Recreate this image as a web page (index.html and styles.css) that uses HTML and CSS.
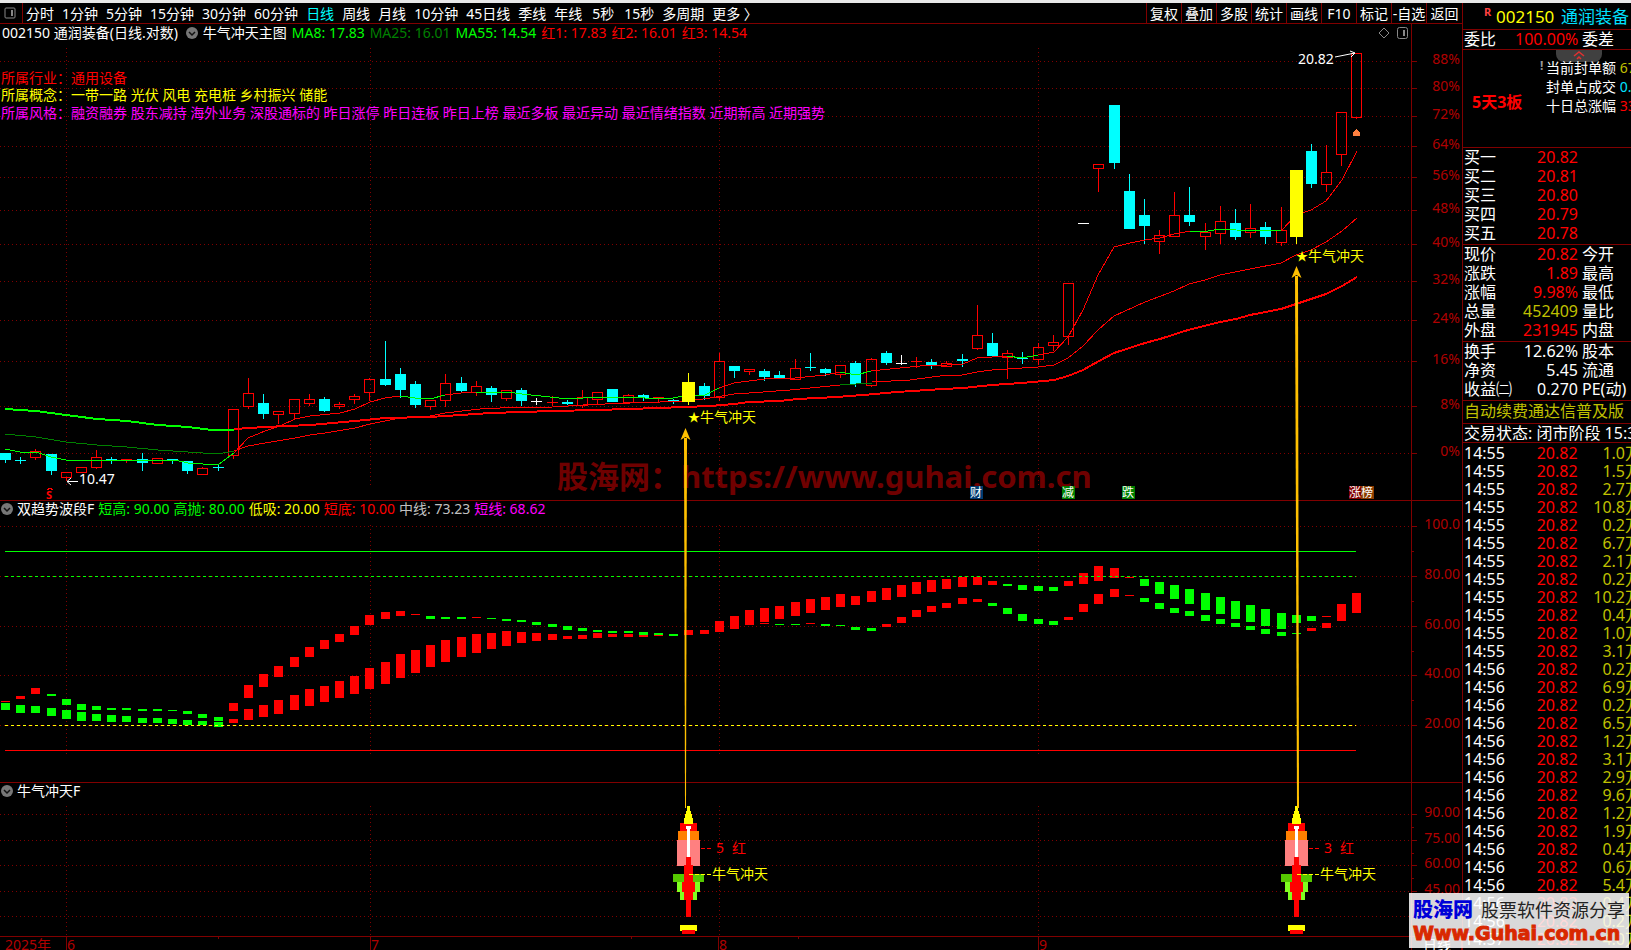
FILE: index.html
```html
<!DOCTYPE html>
<html lang="zh-CN">
<head>
  <meta charset="UTF-8">
  <meta name="viewport" content="width=device-width, initial-scale=1.0">
  <title>002150 通润装备</title>
  <link rel="stylesheet" href="styles.css">
</head>
<body>

<div class="app">
  <main class="main">
    <nav class="toolbar">
      <span class="panel-toggle">
        <svg width="12" height="12" viewBox="0 0 12 12"><rect x="1" y="1" width="10" height="10" rx="1" fill="none" stroke="#888"/><rect x="7" y="3" width="2" height="6" fill="#888"/></svg>
      </span>
      <div class="periods">
        <button>分时</button>
        <button>1分钟</button>
        <button>5分钟</button>
        <button>15分钟</button>
        <button>30分钟</button>
        <button>60分钟</button>
        <button class="active">日线</button>
        <button>周线</button>
        <button>月线</button>
        <button>10分钟</button>
        <button>45日线</button>
        <button>季线</button>
        <button>年线</button>
        <button class="sec">5秒</button>
        <button class="sec">15秒</button>
        <button>多周期</button>
        <button>更多 〉</button>
      </div>
      <div class="tools">
        <button>复权</button>
        <button>叠加</button>
        <button>多股</button>
        <button>统计</button>
        <button>画线</button>
        <button>F10</button>
        <button>标记</button>
        <button>-自选</button>
        <button>返回</button>
      </div>
    </nav>

    <div class="charts">
      <!-- K line -->
      <section class="panel">
        <header class="panel-head main-head">
          <span class="title">002150 通润装备(日线.对数)</span>
          <svg class="drop" width="12" height="12" viewBox="0 0 12 12"><circle cx="6" cy="6" r="6" fill="#777"/><path d="M3 5l3 3 3-3" fill="none" stroke="#111" stroke-width="1.5"/></svg>
          <span>牛气冲天主图</span>
          <span class="green">MA8: 17.83</span>
          <span class="dark-green">MA25: 16.01</span>
          <span class="green">MA55: 14.54</span>
          <span class="red">红1: 17.83</span>
          <span class="red">红2: 16.01</span>
          <span class="red">红3: 14.54</span>
          <span class="head-icons">
            <svg width="30" height="14" viewBox="0 0 30 14"><path d="M6 2l5 5-5 5-5-5z" fill="none" stroke="#888"/><rect x="19.500" y="1.500" width="10" height="11" rx="2" fill="none" stroke="#888"/><rect x="25" y="4" width="2" height="6" fill="#888"/></svg>
          </span>
        </header>
        <svg class="chart" id="kline" viewBox="0 42 1462 458">
          <g id="klineGrid"></g>
          <text class="mark" x="557" y="488">股海网：https://www.guhai.com.cn</text>
          <g id="candles"></g>
          <g id="maLines"></g>
          <g id="signals"></g>

          <text class="t-red" x="1" y="83">所属行业：通用设备</text>
          <text class="t-yellow" x="1" y="100">所属概念：一带一路 光伏 风电 充电桩 乡村振兴 储能</text>
          <text class="t-magenta" x="1" y="118">所属风格：融资融券 股东减持 海外业务 深股通标的 昨日涨停 昨日连板 昨日上榜 最近多板 最近异动 最近情绪指数 近期新高 近期强势</text>

          <text class="t-white" x="1298" y="64">20.82</text>
          <path class="pointer" d="M1335 57l20-4M1350 51l5 2-4 4"/>
          <text class="t-white" x="79" y="484">10.47</text>
          <path class="pointer" d="M78 481.500H67M71 478l-4 3.500 4 3.500"/>
          <text class="t-red small-s" x="46" y="499">S</text>
          <path d="M47 490l3-2 3 2" fill="none" stroke="#f00"/>
          <path d="M1353 136v-3l3.500-4 3.500 4v3z" fill="#ff8040"/>

          <text class="t-yellow" x="688" y="422"><tspan class="star">★</tspan>牛气冲天</text>
          <text class="t-yellow" x="1296" y="261"><tspan class="star">★</tspan>牛气冲天</text>

          <g class="tags">
            <rect x="970" y="486" width="13" height="13" fill="#003a70"/><text x="970" y="497">财</text>
            <rect x="1062" y="486" width="13" height="13" fill="#008000"/><text x="1062" y="497">减</text>
            <rect x="1122" y="486" width="13" height="13" fill="#008000"/><text x="1122" y="497">跌</text>
            <rect x="1349" y="486" width="12" height="13" fill="#800000"/><text x="1349" y="497">涨</text>
            <rect x="1361" y="486" width="13" height="13" fill="#8a3c00"/><text x="1361" y="497">榜</text>
          </g>
        </svg>
      </section>

      <!-- trend bands -->
      <section class="panel">
        <header class="panel-head">
          <svg class="drop" width="12" height="12" viewBox="0 0 12 12"><circle cx="6" cy="6" r="6" fill="#777"/><path d="M3 5l3 3 3-3" fill="none" stroke="#111" stroke-width="1.5"/></svg>
          <span>双趋势波段F</span>
          <span class="green">短高: 90.00</span>
          <span class="green">高抛: 80.00</span>
          <span class="yellow">低吸: 20.00</span>
          <span class="red">短底: 10.00</span>
          <span class="gray">中线: 73.23</span>
          <span class="magenta">短线: 68.62</span>
        </header>
        <svg class="chart" id="trend" viewBox="0 519 1462 263">
          <g id="trendGrid"></g>
          <g id="bands"></g>
          <path d="M5 551.500H1356" stroke="#0f0"/>
          <path d="M5 576.500H1356" stroke="#0f0" stroke-dasharray="3 3"/>
          <path d="M5 725.500H1356" stroke="#ff0" stroke-dasharray="3 3"/>
          <path d="M5 750.500H1356" stroke="#f00"/>
        </svg>
      </section>

      <!-- signal rockets -->
      <section class="panel">
        <header class="panel-head">
          <svg class="drop" width="12" height="12" viewBox="0 0 12 12"><circle cx="6" cy="6" r="6" fill="#777"/><path d="M3 5l3 3 3-3" fill="none" stroke="#111" stroke-width="1.5"/></svg>
          <span>牛气冲天F</span>
        </header>
        <svg class="chart" id="rocket" viewBox="0 801 1462 135">
          <g id="rocketGrid"></g>
          <g id="rockets"></g>
          <path d="M701 848.500h4m2 0h4M1309 848.500h4m2 0h4" stroke="#f00"/>
          <text class="t-red" x="716" y="853">5</text>
          <text class="t-red" x="732" y="853">红</text>
          <text class="t-red" x="1324" y="853">3</text>
          <text class="t-red" x="1340" y="853">红</text>
          <path d="M689 874.500h22M1297 874.500h22" stroke="#ff0" stroke-dasharray="4 2"/>
          <text class="t-yellow" x="712" y="879">牛气冲天</text>
          <text class="t-yellow" x="1320" y="879">牛气冲天</text>
        </svg>
      </section>

      <svg class="chart" viewBox="0 937 1462 13">
        <path d="M66.500 937v13M370.500 937v13M718.500 937v13M1038.500 937v13M1411.500 937v13M1461.500 937v13M218.500 937v2M631.500 937v2M798.500 937v2" stroke="#800000"/>
        <text class="t-axis" x="5" y="950">2025年</text>
        <text class="t-axis" x="67" y="950">6</text>
        <text class="t-axis" x="371" y="950">7</text>
        <text class="t-axis" x="719" y="950">8</text>
        <text class="t-axis" x="1039" y="950">9</text>
        <text class="t-white" x="1423" y="950">日线</text>
      </svg>

      <!-- arrows from the rockets up to the signal candles -->
      <svg class="overlay" viewBox="0 24 1462 926">
        <path d="M684 438h3L686 808h-1z" fill="#ffc000"/>
        <path d="M685.500 428l5 12-5-3-5 3z" fill="#ffc000"/>
        <path d="M1295 276h3L1299 808h-2z" fill="#ffc000"/>
        <path d="M1296.500 266l5 12-5-3-5 3z" fill="#ffc000"/>
      </svg>
    </div>
  </main>

  <aside class="side">
    <h1 class="stock"><sup>R</sup><span class="code">002150</span><span class="name">通润装备</span></h1>

    <table class="quote ratio">
      <tr><th>委比</th><td class="red">100.00%</td><th>委差</th></tr>
    </table>

    <div class="limit">
      <button class="fold" aria-label="收起">
        <svg width="12" height="10" viewBox="0 0 12 10"><path d="M1 5l5-4 5 4M4 8l2-2 2 2" fill="none" stroke="#e03030" stroke-width="1.5"/></svg>
      </button>
      <strong>5天3板</strong>
      <ul>
        <li class="warn">当前封单额 <span class="olive">67</span></li>
        <li>封单占成交 <span class="cyan">0.9</span></li>
        <li>十日总涨幅 <span class="red">33</span></li>
      </ul>
    </div>

    <table class="quote bids">
      <tr><th>买一</th><td class="red">20.82</td><th></th></tr>
      <tr><th>买二</th><td class="red">20.81</td><th></th></tr>
      <tr><th>买三</th><td class="red">20.80</td><th></th></tr>
      <tr><th>买四</th><td class="red">20.79</td><th></th></tr>
      <tr><th>买五</th><td class="red">20.78</td><th></th></tr>
    </table>

    <table class="quote">
      <tr><th>现价</th><td class="red">20.82</td><th>今开</th></tr>
      <tr><th>涨跌</th><td class="red">1.89</td><th>最高</th></tr>
      <tr><th>涨幅</th><td class="red">9.98%</td><th>最低</th></tr>
      <tr><th>总量</th><td class="olive">452409</td><th>量比</th></tr>
      <tr><th>外盘</th><td class="red">231945</td><th>内盘</th></tr>
    </table>

    <table class="quote">
      <tr><th>换手</th><td>12.62%</td><th>股本</th></tr>
      <tr><th>净资</th><td>5.45</td><th>流通</th></tr>
      <tr><th>收益㈡</th><td>0.270</td><th>PE(动)</th></tr>
    </table>

    <p class="notice olive">自动续费通达信普及版</p>
    <p class="status">交易状态: 闭市阶段 15:30</p>

    <table class="ticks">
      <tbody id="ticks"></tbody>
    </table>
  </aside>

  <div class="logo">
    <div class="logo-top"><b>股海网</b><span>股票软件资源分享</span></div>
    <div class="logo-url">Www.Guhai.com.cn</div>
  </div>
</div>

<script src="charts.js"></script>
</body>
</html>
```
FILE: styles.css
```css
* { box-sizing: border-box; }
body {
  margin: 0;
  background: #000;
  color: #fff;
  font-family: "Noto Sans", "Noto Sans CJK SC", sans-serif;
  font-size: 14px;
  line-height: 18px;
  overflow: hidden;
}
button {
  background: none;
  border: none;
  color: inherit;
  font: inherit;
  padding: 0;
  white-space: nowrap;
  cursor: pointer;
}
.app {
  display: grid;
  grid-template-columns: minmax(0, 1fr) 169px;
  min-height: 100vh;
  border-top: 3px solid #e8e8e8;
  position: relative;
}

/* colours */
.green { color: #0f0; }
.dark-green { color: #008000; }
.red { color: #f00; }
.yellow { color: #ff0; }
.magenta { color: #f0f; }
.gray { color: #c0c0c0; }
.olive { color: #c0c000; }
.cyan { color: #00e0ff; }

/* toolbar */
.toolbar {
  display: flex;
  height: 21px;
  border-bottom: 1px solid #800000;
  line-height: 20px;
}
.toolbar button { padding-top: 1px; }
.panel-toggle {
  display: flex;
  align-items: center;
  width: 23px;
  padding-left: 4px;
  border-right: 1px solid #800000;
}
.periods {
  display: flex;
  gap: 8px;
  padding-left: 3px;
}
.periods .active { color: #00ffff; }
.periods .sec { padding-left: 2px; }
.tools {
  display: flex;
  margin-left: auto;
}
.tools button {
  width: 35px;
  border-left: 1px solid #800000;
  text-align: center;
}
.tools button:last-child { width: 36px; }

/* charts */
.charts { position: relative; }
.panel { border-bottom: 1px solid #800000; }
.panel-head {
  display: flex;
  align-items: center;
  gap: 4px;
  height: 18px;
  padding: 0 0 2px 1px;
  line-height: 16px;
  white-space: nowrap;
}
.main-head {
  gap: 5px;
  padding: 0 0 0 2px;
}
.main-head .title { padding-right: 3px; }
.head-icons {
  display: flex;
  margin-left: auto;
  padding-right: 54px;
}
.chart {
  display: block;
  width: 100%;
  overflow: visible;
  shape-rendering: crispEdges;
}
.overlay {
  position: absolute;
  top: 0;
  left: 0;
  width: 100%;
  pointer-events: none;
}
.chart text { font-size: 14px; }
.t-red { fill: #f00; }
.t-yellow { fill: #ff0; }
.t-magenta { fill: #f0f; }
.t-white { fill: #fff; }
.t-axis { fill: #b00000; }
.star { font-size: 12px; }
.chart .small-s { font-size: 11px; font-weight: bold; }
.chart .mark {
  fill: #f00;
  fill-opacity: 0.45;
  font-size: 31px;
  font-weight: bold;
}
.chart .tags text { font-size: 12px; fill: #fff; }
.pointer {
  fill: none;
  stroke: #fff;
  shape-rendering: auto;
}

/* side quote */
.side {
  border-left: 1px solid #800000;
  overflow: hidden;
  font-size: 16px;
  white-space: nowrap;
}
.stock {
  display: flex;
  height: 27px;
  margin: 0;
  padding-left: 21px;
  border-bottom: 1px solid #800000;
  font-size: 17px;
  font-weight: normal;
  line-height: 28px;
}
.stock sup {
  width: 12px;
  font-size: 11px;
  font-weight: bold;
  line-height: 18px;
  color: #ff4040;
}
.stock .code { width: 65px; color: #ff0; }
.stock .name { color: #00e0ff; }
table { border-collapse: collapse; }
.quote, .ticks {
  table-layout: fixed;
  width: 178px;
}
.quote {
  border-bottom: 1px solid #800000;
}
.quote th, .quote td {
  height: 19px;
  padding: 0;
  line-height: 19px;
  font-weight: normal;
  text-align: right;
}
.quote th { text-align: left; padding-left: 1px; }
.quote th:first-child { width: 52px; }
.quote td { width: 63px; }
.quote th:last-child { padding-left: 4px; }
.quote tr:last-child > * { height: 20px; padding-bottom: 1px; }
.ratio tr:last-child > * { height: 19px; padding-bottom: 0; }
.limit {
  display: flex;
  position: relative;
  height: 98px;
  padding-top: 8px;
  border-bottom: 1px solid #800000;
  font-size: 14px;
}
.fold {
  position: absolute;
  top: 0;
  left: 93px;
  width: 46px;
  height: 12px;
  border-radius: 0 0 8px 8px;
  background: #404040;
}
.fold svg { display: block; margin: 0 auto; }
.limit strong {
  flex: none;
  width: 69px;
  padding: 34px 0 0 9px;
  font-size: 16px;
  line-height: 20px;
  color: #f00;
}
.limit ul {
  margin: 0;
  padding: 0 0 0 14px;
  list-style: none;
  line-height: 19px;
  position: relative;
}
.limit .warn::before {
  content: "!";
  position: absolute;
  left: 8px;
  top: -2px;
  font-size: 12px;
  font-weight: bold;
  color: #999;
}
.notice, .status {
  margin: 0;
  padding-left: 1px;
  border-bottom: 1px solid #800000;
}
.notice { height: 23px; line-height: 21px; }
.status { height: 19px; line-height: 18px; }
.ticks { margin-top: 1px; }
.ticks td {
  width: 63px;
  height: 18px;
  padding: 0;
  line-height: 18px;
  text-align: right;
}
.ticks td:first-child { width: 51px; padding-left: 1px; text-align: left; }

/* site logo over the lower right corner */
.logo {
  position: absolute;
  right: 2px;
  bottom: 2px;
  width: 220px;
  height: 55px;
  padding: 4px 4px 0;
  background: rgba(255, 255, 255, 0.85);
  white-space: nowrap;
}
.logo-top {
  display: flex;
  justify-content: space-between;
  line-height: 26px;
}
.logo-top b { font-size: 20px; font-weight: 900; color: #0000d8; }
.logo-top span { font-size: 18px; color: #222; }
.logo-url {
  font-family: "DejaVu Sans", sans-serif;
  font-size: 19px;
  font-weight: bold;
  line-height: 20px;
  color: #d92800;
  -webkit-text-stroke: 1px #d92800;
}
```
FILE: charts.js
```javascript
const GRID = "#800000";
const COLORS = { r: "#ff0000", c: "#00ffff", g: "#00ff00", d: "#008000", y: "#ffff00", w: "#ffffff" };
const MONTHS = [66, 370, 719, 1038];

const barX = i => Math.round(5 + i * 15.185);

function rect(x, y, w, h, fill) {
  return `<rect x="${x}" y="${y}" width="${w}" height="${h}" fill="${fill}"/>`;
}

function drawGrid(id, top, bottom, end, levels, minor) {
  let out = "";
  MONTHS.forEach(x => {
    out += `<path d="M${x + 0.5} ${top}V${bottom}" stroke="${GRID}" stroke-dasharray="1 3"/>`;
  });
  levels.forEach(([y, label]) => {
    out += `<path d="M0 ${y + 0.5}H1411" stroke="${GRID}" stroke-dasharray="1 3"/>`;
    out += `<path d="M1411 ${y + 0.5}H1417" stroke="${GRID}"/>`;
    out += `<text class="t-axis" x="1460" y="${y + 3}" text-anchor="end">${label}</text>`;
  });
  minor.forEach(y => { out += rect(1412, y, 2, 1, GRID); });
  out += rect(1411, end[0], 1, end[1] - end[0], GRID);
  document.getElementById(id).innerHTML = out;
}

drawGrid("klineGrid", 48, 485, [24, 500], [
  [61, "88%"], [88, "80%"], [116, "72%"], [146, "64%"], [177, "56%"], [210, "48%"],
  [244, "40%"], [281, "32%"], [320, "24%"], [361, "16%"], [406, "8%"], [453, "0%"]
], []);
drawGrid("trendGrid", 525, 757, [501, 782], [
  [526, "100.0"], [576, "80.00"], [626, "60.00"], [675, "40.00"], [725, "20.00"]
], [551, 601, 651, 700]);
drawGrid("rocketGrid", 806, 935, [783, 936], [
  [814, "90.00"], [840, "75.00"], [865, "60.00"], [891, "45.00"], [916, "30.00"]
], [827, 853, 878, 904]);

// type, high, body top, body bottom, low
const candles = [
  ["c", 453, 453, 460, 463], ["c", 457, 460, 461, 464], ["r", 449, 451, 458, 460], ["c", 454, 454, 471, 475],
  ["r", 472, 472, 478, 481], ["r", 467, 467, 473, 473], ["r", 450, 457, 468, 469], ["c", 457, 459, 460, 464],
  ["r", 459, 459, 461, 463], ["c", 453, 459, 463, 471], ["r", 458, 458, 464, 464], ["c", 459, 459, 460, 464],
  ["c", 461, 461, 471, 474], ["r", 467, 468, 475, 475], ["c", 464, 467, 468, 471], ["r", 409, 409, 456, 459],
  ["r", 378, 393, 407, 409], ["c", 394, 403, 414, 419], ["r", 411, 411, 415, 424], ["r", 399, 399, 414, 419],
  ["r", 394, 399, 404, 406], ["c", 397, 399, 411, 412], ["r", 402, 404, 407, 409], ["r", 394, 396, 400, 404],
  ["r", 378, 379, 393, 401], ["c", 341, 379, 385, 386], ["c", 368, 374, 390, 398], ["c", 381, 384, 405, 408],
  ["r", 400, 400, 407, 410], ["r", 374, 383, 401, 407], ["c", 377, 383, 391, 393], ["r", 381, 386, 393, 396],
  ["c", 386, 388, 395, 402], ["r", 390, 390, 399, 401], ["c", 388, 390, 401, 406], ["w", 398, 401, 402, 405],
  ["r", 396, 402, 403, 406], ["c", 400, 402, 404, 405], ["r", 390, 397, 406, 408], ["r", 392, 392, 400, 404],
  ["c", 389, 389, 402, 402], ["r", 394, 395, 403, 403], ["c", 394, 395, 398, 401], ["r", 397, 397, 399, 402],
  ["c", 399, 400, 402, 404], ["y", 373, 382, 402, 405], ["c", 383, 386, 396, 400], ["r", 353, 361, 398, 401],
  ["c", 366, 366, 371, 378], ["r", 369, 369, 372, 375], ["c", 369, 371, 377, 381], ["c", 371, 375, 378, 379],
  ["r", 359, 368, 380, 380], ["c", 353, 367, 368, 371], ["c", 368, 369, 373, 376], ["r", 365, 365, 375, 378],
  ["c", 361, 363, 384, 387], ["r", 358, 359, 386, 387], ["c", 351, 353, 363, 365], ["w", 355, 363, 364, 365],
  ["r", 357, 361, 362, 368], ["c", 359, 362, 365, 369], ["r", 361, 363, 367, 367], ["c", 354, 359, 361, 367],
  ["r", 305, 335, 349, 350], ["c", 333, 343, 356, 356], ["r", 350, 353, 358, 379], ["c", 352, 358, 359, 364],
  ["r", 343, 347, 360, 365], ["r", 335, 342, 346, 351], ["r", 283, 283, 337, 345], ["w", 223, 223, 224, 224],
  ["r", 164, 164, 169, 192], ["c", 105, 105, 163, 169], ["c", 174, 191, 229, 229], ["c", 199, 215, 226, 244],
  ["r", 230, 235, 242, 254], ["r", 192, 215, 237, 237], ["c", 187, 215, 222, 226], ["r", 223, 232, 237, 250],
  ["r", 206, 221, 234, 244], ["c", 209, 223, 237, 240], ["r", 204, 228, 233, 238], ["c", 222, 227, 237, 244],
  ["r", 207, 230, 243, 246], ["y", 170, 170, 237, 244], ["c", 144, 151, 184, 188], ["r", 145, 172, 185, 192],
  ["r", 112, 112, 155, 166], ["r", 53, 53, 118, 119]
];

function candle(i) {
  const [type, high, top, bottom, low] = candles[i];
  const x = barX(i);
  const color = COLORS[type];
  let out = "";
  if (type === "r" && bottom - top > 1) {
    out += rect(x, high, 1, top - high, color) + rect(x, bottom, 1, low - bottom, color);
    out += `<rect x="${x - 4.5}" y="${top + 0.5}" width="10" height="${bottom - top - 1}" fill="none" stroke="${color}"/>`;
  } else {
    const half = type === "y" ? 6 : 5;
    out += rect(x, high, 1, low - high, color);
    out += rect(x - half, top, half * 2 + 1, bottom - top, color);
  }
  return out;
}

let candleSvg = "", signalSvg = "";
candles.forEach((c, i) => {
  if (c[0] === "y") signalSvg += candle(i);
  else candleSvg += candle(i);
});
document.getElementById("candles").innerHTML = candleSvg;
document.getElementById("signals").innerHTML = signalSvg;

// colour, stroke width, points
const lines = [
  ["g", 2, "5,409 36,411 66,415 97,419 127,421 158,425 188,427 212,430 234,430"],
  ["r", 2, "234,429 265,427 310,425 355,421 385,418 430,417 491,413 522,412 553,411 597,410 628,409 658,408 710,406 734,404 749,402 780,401 797,399 837,397 863,395 897,392 943,389 963,388 992,385 1022,383 1054,380 1068,376 1083,370 1099,361 1114,353 1145,343 1160,339 1188,330 1220,322 1236,319 1250,315 1281,309 1296,304 1326,294 1342,286 1357,277"],
  ["d", 1, "5,434 36,437 66,442 97,445 127,447 158,450 188,452 218,454 234,451"],
  ["r", 1, "234,451 248,446 265,443 295,438 310,435 325,433 355,428 370,424 400,418 430,416 445,413 480,409 500,408 553,407 583,405 605,404 630,403 660,402 688,401 710,398 734,394 749,393 790,390 840,385"],
  ["d", 1, "840,385 872,383"],
  ["r", 1, "872,382 910,380 940,376 962,375 977,372 992,370 1007,369 1038,367 1054,365 1068,358 1083,346 1098,330 1114,316 1145,302 1174,291 1189,284 1205,280 1220,275 1250,269 1281,263 1296,255 1311,250 1326,242 1342,231 1357,218"],
  ["g", 1, "5,449 20,452 36,452 51,457 66,460 81,461 97,460 175,460 188,463 218,465 234,453"],
  ["r", 1, "234,453 248,438 265,431 280,426 295,419 310,416 340,413 355,409 370,402 385,398 400,396"],
  ["g", 1, "400,396 415,398 430,399 445,395"],
  ["r", 1, "445,395 461,393 476,392"],
  ["g", 1, "476,392 491,393 507,392 522,394 550,397 568,399 583,398 600,397 630,397 645,398 673,398 688,395 705,395 719,388"],
  ["r", 1, "719,388 734,383 749,381 765,379 795,378 825,375 840,372"],
  ["g", 1, "840,372 856,375 871,371"],
  ["r", 1, "871,371 890,369 920,366 947,365 963,364 977,358 992,357 1007,356"],
  ["g", 1, "1007,356 1022,358 1038,355"],
  ["r", 1, "1038,355 1054,352 1068,337 1083,310 1098,275 1114,247 1130,243 1145,240 1160,238 1174,234 1190,231"],
  ["g", 1, "1190,231 1208,231 1220,229 1236,230 1281,231"],
  ["r", 1, "1281,231 1296,215 1311,210 1326,201 1342,180 1357,151"]
];
document.getElementById("maLines").innerHTML = lines.map(([c, w, pts]) =>
  `<polyline points="${pts}" fill="none" stroke="${COLORS[c]}" stroke-width="${w}"/>`
).join("");

// short and middle bands: colour, top, bottom (from y 540)
const shortBand = "r161-162 r156-159 r148-154 g154-156 g159-165 g164-170 g166-170 g168-170 g168-170 g169-171 g169-171 g170-171 g171-174 g174-178 g177-181 r163-171 r145-158 r134-147 r126-137 r117-127 r107-117 r100-109 r94-102 r86-95 r75-85 r72-79 r71-76 r74-75 g76-79 g77-79 g77-79 r77-78 g78-79 g79-81 g80-82 g82-85 g84-87 g86-90 g88-91 g90-92 g91-93 g91-93 g92-95 g93-95 g94-96 r90-95 r90-94 r81-92 r76-89 r70-85 r68-82 r66-79 r62-76 r59-73 r57-70 r54-67 r56-65 r51-62 r48-60 r45-57 r42-54 r40-52 r39-49 r37-47 r37-45 r41-45 g44-46 g45-50 g46-51 g47-51 r41-46 r33-44 r26-41 r28-38 r37-38 g39-46 g42-54 g45-59 g49-64 g53-70 g57-74 g61-79 g65-82 g69-86 g73-89 g75-83 g76-81 r76-77 r64-81 r53-73";
const middleBand = "g163-170 g165-173 g166-173 g168-176 g170-179 g172-181 g174-181 g175-182 g176-182 g178-183 g178-183 g179-184 g180-185 g181-185 g182-187 r179-183 r169-180 r165-177 r160-174 r155-170 r149-166 r146-162 r141-158 r136-154 r128-149 r122-144 r114-138 r110-133 r105-127 r100-122 r97-117 r94-113 r93-109 r91-106 r92-103 r93-101 r94-100 r96-99 r95-99 r93-98 r94-97 r94-97 r94-97 r95-96 - - - - - - r83-84 g84-85 g84-85 r83-84 g84-86 g85-86 g87-90 g88-91 r84-87 r77-83 r70-77 r66-72 r63-68 r58-64 r59-62 g63-66 g68-74 g74-81 g79-84 g81-85 r77-80 r64-72 r54-64 r49-57 r55-56 g58-62 g63-69 g68-73 g71-76 g75-81 g79-84 g83-87 g86-90 g89-94 g92-96 g93-94 r88-91 r83-88 - -";

function drawBand(band) {
  return band.split(" ").map((bar, i) => {
    if (bar === "-") return "";
    const [top, bottom] = bar.slice(1).split("-").map(Number);
    return rect(barX(i) - 4, 540 + top, 9, bottom - top, COLORS[bar[0]]);
  }).join("");
}
document.getElementById("bands").innerHTML = drawBand(middleBand) + drawBand(shortBand);

// rocket parts: half width, top, bottom, colour
const parts = [
  [8, 823, 831, "#ff0000"], [1, 806, 811, "#ffff00"], [2, 811, 814, "#ffff00"], [3, 814, 818, "#ffff00"],
  [4, 818, 824, "#ffff00"], [10, 831, 840, "#ff8000"], [11, 840, 866, "#ff8080"], [2, 826, 829, "#ffffff"],
  [1, 829, 857, "#ffffff"], [15, 874, 882, "#55c800"], [11, 882, 892, "#80ff20"], [8, 892, 900, "#80ff20"],
  [2, 857, 917, "#ff0000"], [4, 865, 900, "#ff0000"], [6, 882, 892, "#ff0000"],
  [8, 925, 931, "#ffff00"], [6, 930, 934, "#ff0000"]
];
document.getElementById("rockets").innerHTML = [688, 1296].map(x =>
  parts.map(([half, top, bottom, fill]) => rect(x - half, top, half * 2 + 1, bottom - top, fill)).join("")
).join("");

// last trades
const volumes = ["1.0", "1.5", "2.7", "10.8", "0.2", "6.7", "2.1", "0.2", "10.2", "0.4", "1.0", "3.1", "0.2", "6.9",
  "0.2", "6.5", "1.2", "3.1", "2.9", "9.6", "1.2", "1.9", "0.4", "0.6", "5.4", "0.4", "0.2", "4.0"];
document.getElementById("ticks").innerHTML = volumes.map((v, i) => {
  const time = i < 12 ? "14:55" : i < 27 ? "14:56" : "14:57";
  return `<tr><td>${time}</td><td class="red">20.82</td><td class="olive">${v}万</td></tr>`;
}).join("");
```
